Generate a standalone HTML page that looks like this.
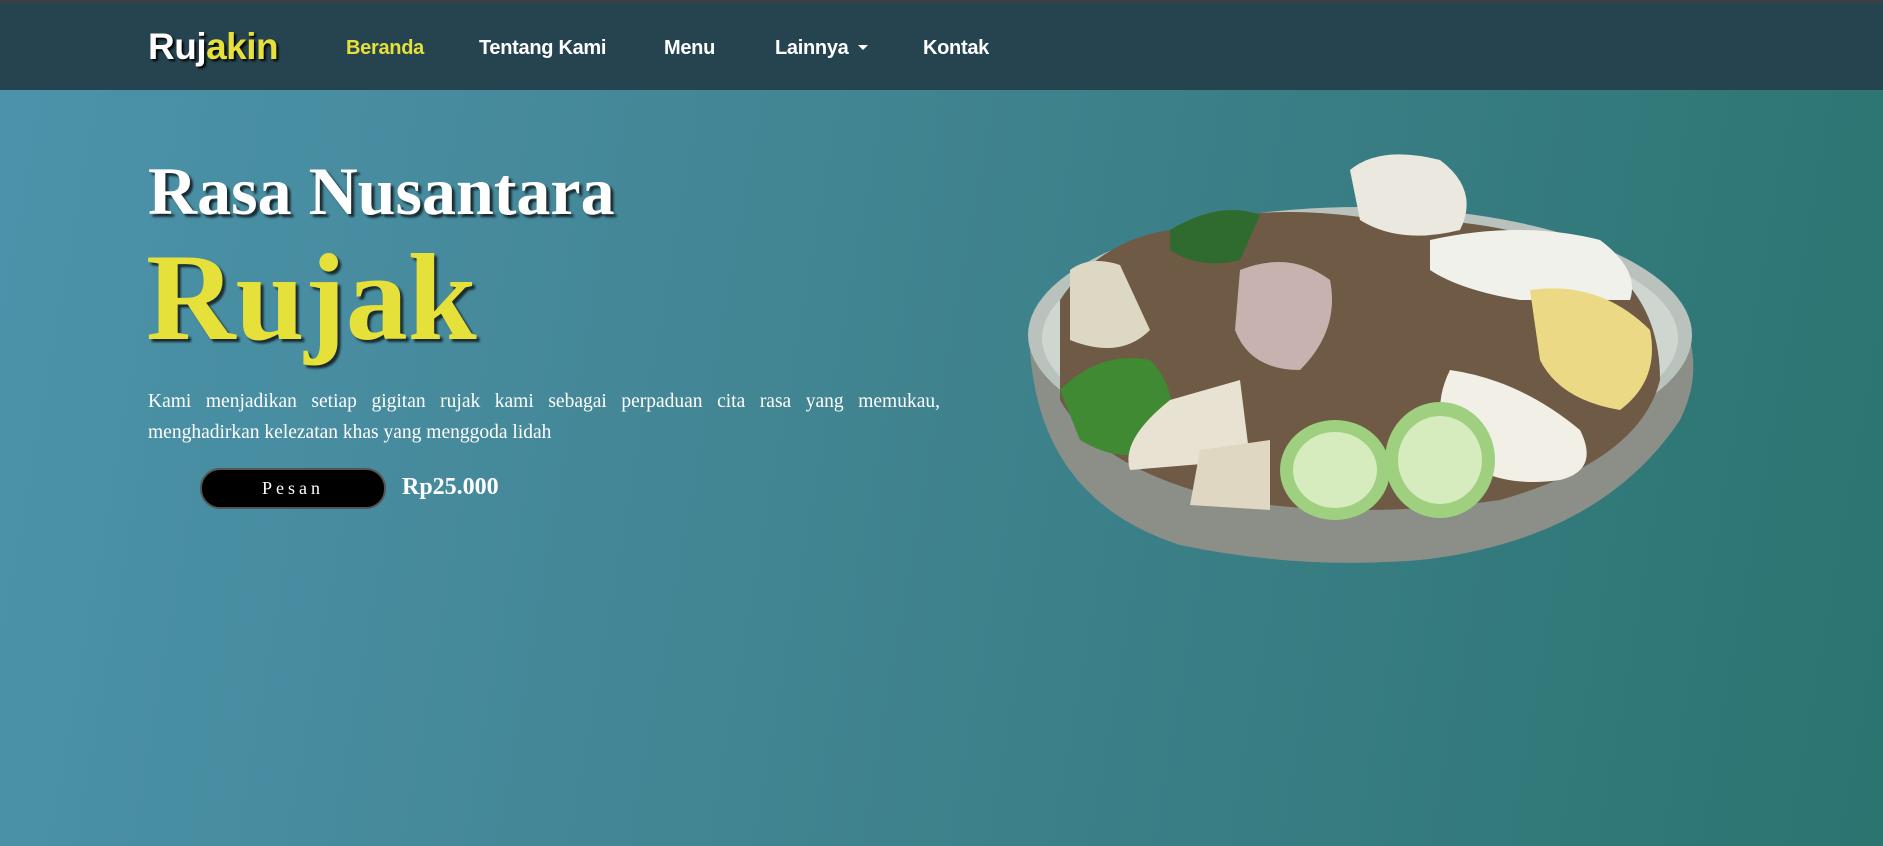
<!DOCTYPE html>
<html><head><meta charset="utf-8"><style>
html,body{margin:0;padding:0;width:1883px;height:846px;overflow:hidden}
body{background:linear-gradient(100deg,#4c93ab 0%,#418491 45%,#2b7470 100%);font-family:"Liberation Serif",serif;position:relative}
.top{position:absolute;left:0;top:0;width:1883px;height:3px;background:#3a3f44}
nav{position:absolute;left:0;top:3px;width:1883px;height:87px;background:#26444f}
.logo{position:absolute;left:148px;top:23px;font:bold 37px "Liberation Sans",sans-serif;color:#fff;text-shadow:2px 2px 2px #000;letter-spacing:-0.5px}
.logo span{color:#e6e03a}
.nl{position:absolute;top:34px;font:bold 20px "Liberation Sans",sans-serif;color:#fff;letter-spacing:-0.3px}
.caret{display:inline-block;margin-left:10px;vertical-align:4px;border-left:5px solid transparent;border-right:5px solid transparent;border-top:5px solid #fff}
h1{position:absolute;left:148px;top:152px;margin:0;font:bold 68px "Liberation Serif",serif;color:#fff;text-shadow:3px 3px 2px #1a2a30;white-space:nowrap}
h2{position:absolute;left:146px;top:236px;margin:0;font:bold 124px/1 "Liberation Serif",serif;color:#e6e03a;text-shadow:3px 3px 2px #1a2a30}
p{position:absolute;left:148px;top:386px;width:792px;margin:0;font:19.5px/31px "Liberation Serif",serif;color:#fff;text-align:justify}
.btn{position:absolute;left:200px;top:468px;width:182px;height:37px;background:#000;border:2px solid #555;border-radius:20px;color:#fff;font:18px/37px "Liberation Serif",serif;letter-spacing:4px;text-align:center}
.price{position:absolute;left:402px;top:474px;font:bold 24px "Liberation Serif",serif;color:#fff}
svg{position:absolute;left:0;top:0}
</style></head><body>
<div class="top"></div>
<nav>
<div class="logo">Ruj<span>akin</span></div>
<div class="nl" style="left:346px;color:#e6e03a">Beranda</div>
<div class="nl" style="left:479px">Tentang Kami</div>
<div class="nl" style="left:664px">Menu</div>
<div class="nl" style="left:775px">Lainnya<span class="caret"></span></div>
<div class="nl" style="left:923px">Kontak</div>
</nav>
<h1>Rasa Nusantara</h1>
<h2>Rujak</h2>
<p>Kami menjadikan setiap gigitan rujak kami sebagai perpaduan cita rasa yang memukau, menghadirkan kelezatan khas yang menggoda lidah</p>
<div class="btn">Pesan</div>
<div class="price">Rp25.000</div>
<svg width="1883" height="846" viewBox="0 0 1883 846">
<path d="M1030 350 Q1040 500 1180 545 Q1300 570 1420 560 Q1600 540 1680 420 Q1700 380 1690 340 Z" fill="#8b8f88"/>
<ellipse cx="1360" cy="335" rx="332" ry="128" fill="#b9c2bd"/>
<ellipse cx="1360" cy="338" rx="318" ry="116" fill="#cfd6cf"/>
<path d="M1060 300 Q1100 240 1170 230 Q1260 200 1380 220 Q1500 215 1600 260 Q1660 300 1660 380 Q1640 460 1500 500 Q1360 520 1230 500 Q1100 470 1060 400 Z" fill="#6e5a45"/>
<path d="M1070 270 Q1090 255 1120 265 L1150 330 Q1120 360 1070 340 Z" fill="#ddd8c4"/>
<path d="M1170 230 Q1220 200 1260 215 L1240 260 Q1200 270 1170 250 Z" fill="#2f6a2f"/>
<path d="M1350 170 Q1380 145 1440 160 Q1480 190 1460 230 Q1400 245 1360 220 Z" fill="#ebe8df"/>
<path d="M1430 240 Q1520 220 1600 240 Q1640 270 1630 300 L1520 300 Q1460 290 1430 270 Z" fill="#f1f1ec"/>
<path d="M1530 290 Q1600 280 1650 330 Q1660 380 1620 410 Q1560 400 1540 360 Z" fill="#ecd986"/>
<path d="M1240 270 Q1290 250 1330 280 Q1340 330 1300 370 Q1250 370 1235 330 Z" fill="#c8b2b0"/>
<path d="M1060 390 Q1100 350 1150 360 Q1180 390 1170 440 Q1130 470 1080 440 Z" fill="#3f8a33"/>
<path d="M1170 400 L1240 380 L1250 460 L1130 470 Q1120 440 1170 400 Z" fill="#e8e2d2"/>
<path d="M1200 450 L1270 440 L1270 510 L1190 505 Z" fill="#e0d7c2"/>
<path d="M1450 370 Q1520 380 1580 430 Q1600 470 1560 480 Q1490 490 1450 450 Q1430 410 1450 370 Z" fill="#f2efe6"/>
<ellipse cx="1335" cy="470" rx="55" ry="50" fill="#9fd07f"/>
<ellipse cx="1335" cy="470" rx="42" ry="38" fill="#d6ebbe"/>
<ellipse cx="1440" cy="460" rx="55" ry="58" fill="#9fd07f"/>
<ellipse cx="1440" cy="460" rx="42" ry="44" fill="#d6ebbe"/>
</svg>
</body></html>
